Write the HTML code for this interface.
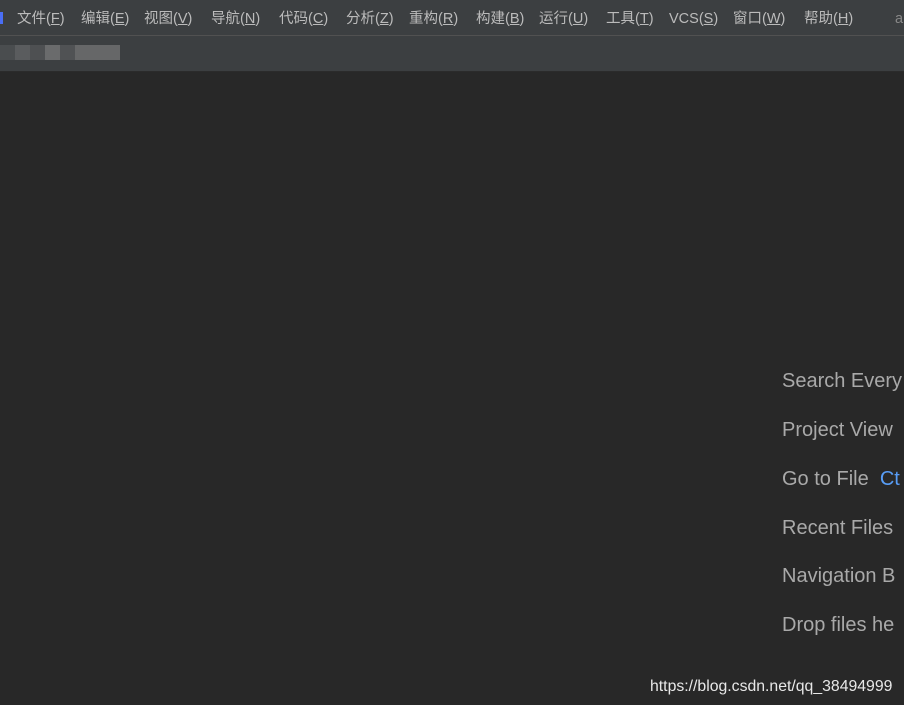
<!DOCTYPE html>
<html><head><meta charset="utf-8"><style>
body{margin:0;width:904px;height:705px;overflow:hidden;background:#282828;position:relative;font-family:"Liberation Sans","Noto Sans CJK SC",sans-serif}
.menu{position:absolute;left:0;top:0;width:904px;height:35px;background:#3c3f41;border-bottom:1px solid #515151}
.menu span{position:absolute;top:10px;font-size:14.5px;color:#bbbbbb;white-space:nowrap;line-height:18px}
.menu u{text-decoration:underline}
.tool{position:absolute;left:0;top:36px;width:904px;height:35px;background:#3c3f41;border-bottom:1px solid #2b2b2b}
.r{position:absolute;left:782px;font-size:20px;color:#a9a9a9;white-space:nowrap;line-height:24px}
.blur{position:absolute;top:45px;height:15px}
</style></head><body>
<div class="menu">
<div style="position:absolute;left:0;top:12px;width:3px;height:12px;background:#4a6ef5"></div>
<span style="left:17px">文件(<u>F</u>)</span>
<span style="left:81px">编辑(<u>E</u>)</span>
<span style="left:144px">视图(<u>V</u>)</span>
<span style="left:211px">导航(<u>N</u>)</span>
<span style="left:279px">代码(<u>C</u>)</span>
<span style="left:346px">分析(<u>Z</u>)</span>
<span style="left:409px">重构(<u>R</u>)</span>
<span style="left:476px">构建(<u>B</u>)</span>
<span style="left:539px">运行(<u>U</u>)</span>
<span style="left:606px">工具(<u>T</u>)</span>
<span style="left:669px">VCS(<u>S</u>)</span>
<span style="left:733px">窗口(<u>W</u>)</span>
<span style="left:804px">帮助(<u>H</u>)</span>
<span style="left:895px;color:#888">a</span>
</div>
<div class="tool"></div>
<div class="blur" style="left:0;width:15px;background:#4a4d4f"></div>
<div class="blur" style="left:15px;width:15px;background:#5a5c5e"></div>
<div class="blur" style="left:30px;width:15px;background:#4e5052"></div>
<div class="blur" style="left:45px;width:15px;background:#6a6b6c"></div>
<div class="blur" style="left:60px;width:15px;background:#505254"></div>
<div class="blur" style="left:75px;width:45px;background:#666768"></div>
<div class="r" style="top:369px">Search Every</div>
<div class="r" style="top:418px">Project View</div>
<div class="r" style="top:467px">Go to File &nbsp;<span style="color:#589df6">Ct</span></div>
<div class="r" style="top:516px">Recent Files</div>
<div class="r" style="top:564px">Navigation B</div>
<div class="r" style="top:613px">Drop files he</div>
<div style="position:absolute;left:650px;top:678px;font-size:15.8px;color:#e8e8e8">https://blog.csdn.net/qq_38494999</div>
</body></html>
